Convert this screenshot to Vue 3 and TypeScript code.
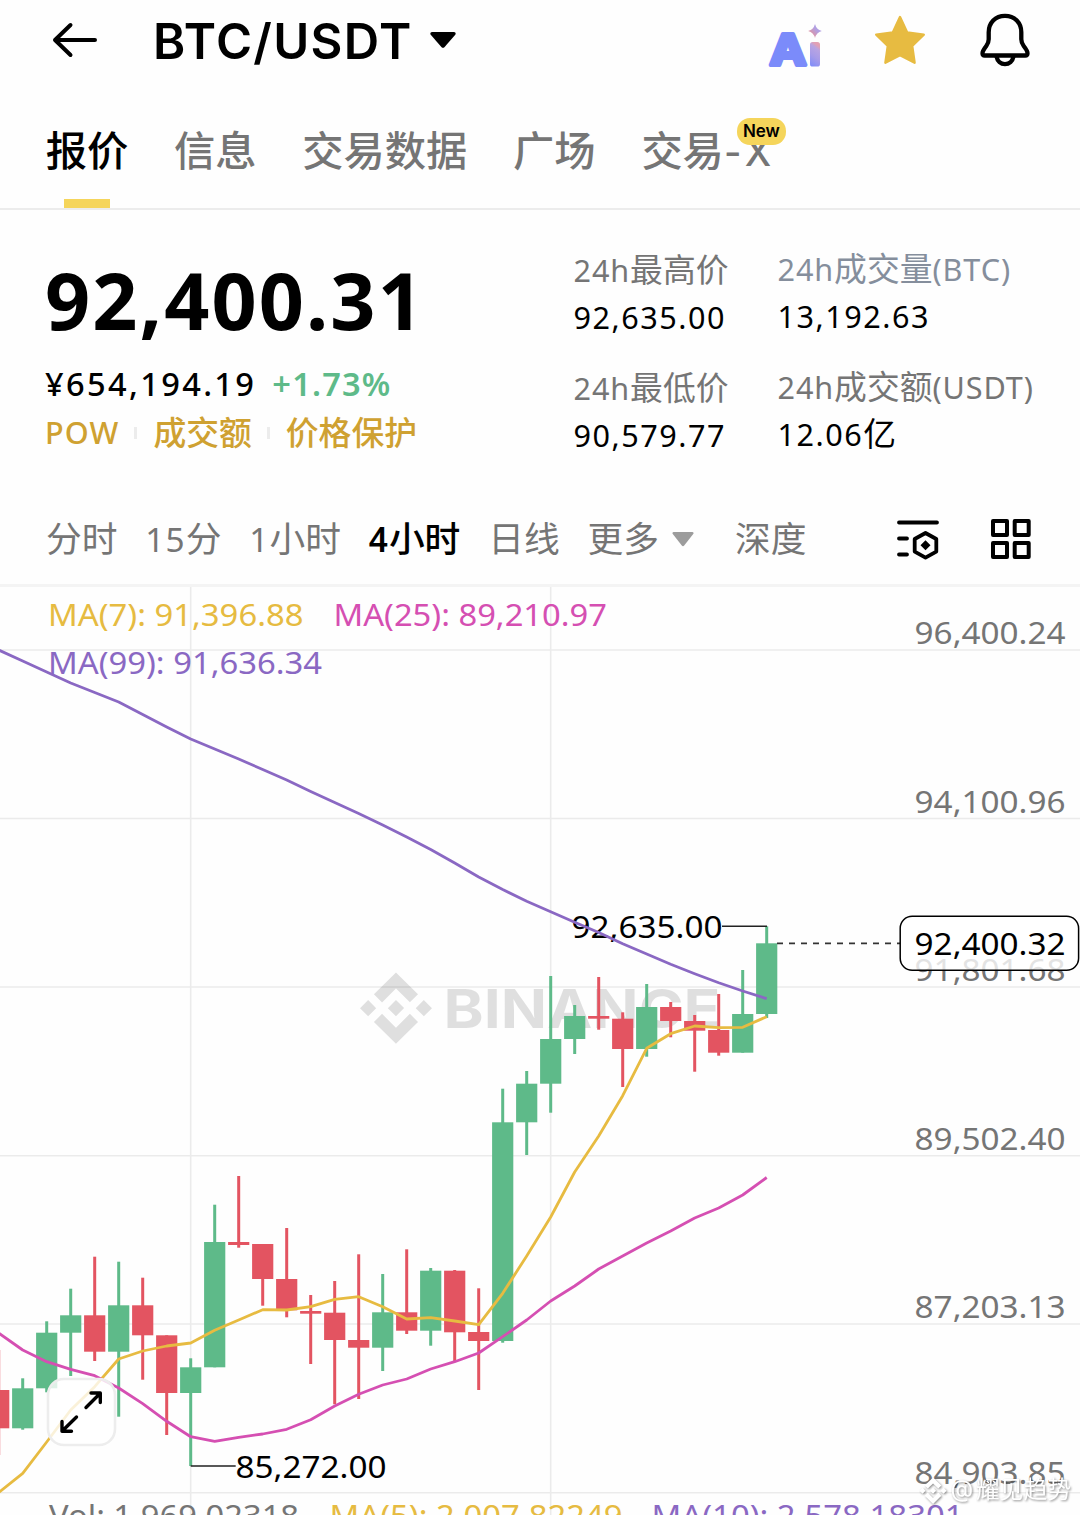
<script setup lang="ts">
interface Run { text: string; latin: boolean }
interface Stat { label: string; value: string; cool?: boolean }
type Candle = [top: number, bottom: number, high: number, low: number, up: boolean]

// Latin runs are set slightly smaller than the Chinese glyphs beside them.
function runs(text: string): Run[] {
  const parts = text.match(/[\x20-\x7e¥]+|[^\x20-\x7e¥]+/g) ?? []
  return parts.map((part) => ({ text: part, latin: /^[\x20-\x7e¥]/.test(part) }))
}

const tabs = ['报价', '信息', '交易数据', '广场', '交易-X']
const tags = ['POW', '成交额', '价格保护']
const statColumns: Stat[][] = [
  [
    { label: '24h最高价', value: '92,635.00' },
    { label: '24h最低价', value: '90,579.77' },
  ],
  [
    { label: '24h成交量(BTC)', value: '13,192.63', cool: true },
    { label: '24h成交额(USDT)', value: '12.06亿' },
  ],
]
const intervals = ['分时', '15分', '1小时', '4小时', '日线']

const step = 24
const firstX = -1.3
const xAt = (i: number): number => firstX + i * step

const candles: Candle[] = [
  [1390, 1428.3, 1350, 1455, false],
  [1388.3, 1428.3, 1378.3, 1429.7, true],
  [1332.7, 1388.3, 1321.3, 1392.3, true],
  [1315.3, 1332.7, 1288.7, 1376, true],
  [1315.3, 1351.7, 1256.7, 1361, false],
  [1305.3, 1351.7, 1261.7, 1416.7, true],
  [1305.3, 1335.3, 1277.7, 1379.7, false],
  [1335.3, 1393, 1335.3, 1435, false],
  [1367.3, 1393, 1358.3, 1466, true],
  [1242, 1367.3, 1204.7, 1367.3, true],
  [1242, 1245, 1176, 1247.7, false],
  [1244, 1279, 1244, 1305.7, false],
  [1279, 1310.3, 1228, 1317.3, false],
  [1311, 1313.7, 1295, 1364, false],
  [1312.7, 1340, 1281, 1404.3, false],
  [1340, 1347.7, 1254.3, 1399, false],
  [1312.3, 1347.7, 1274, 1371, true],
  [1312.3, 1330.7, 1249.3, 1334, false],
  [1270.7, 1330.7, 1268, 1345.7, true],
  [1270.7, 1332.3, 1270, 1362, false],
  [1332, 1341, 1288.3, 1390, false],
  [1122.3, 1341, 1088.7, 1342.7, true],
  [1083.7, 1122.3, 1071, 1155, true],
  [1039, 1083.7, 976, 1112.7, true],
  [1016, 1039, 1005, 1054, true],
  [1016, 1018.7, 977, 1029.7, false],
  [1018.7, 1049, 1012.3, 1087, false],
  [1007, 1049, 984, 1056.7, true],
  [1007, 1021, 1002, 1037.3, false],
  [1021, 1030.7, 1015, 1071.7, false],
  [1030, 1052.7, 994, 1055.7, false],
  [1014, 1052.7, 970, 1052.7, true],
  [943.3, 1014, 926.3, 1018, true],
]

const ma7 = [1492.5, 1473.3, 1442, 1410, 1386.7, 1359, 1351, 1346, 1343, 1330.3, 1320, 1309.7, 1310, 1306.7, 1299.3, 1296.7, 1306.7, 1319, 1317.7, 1321, 1324.7, 1293.3, 1256, 1217, 1172, 1136, 1095.7, 1048.3, 1033.7, 1026, 1027.7, 1027.3, 1016.7]
const ma25 = [1333, 1350, 1361.7, 1369.3, 1375.7, 1388, 1403.7, 1421.3, 1436.7, 1441.4, 1437.3, 1434, 1429.3, 1419.7, 1406, 1394.3, 1385, 1379, 1369, 1361.7, 1353, 1336.7, 1320, 1301, 1286, 1269, 1256, 1243, 1231, 1218, 1208, 1195, 1177.5]
const ma99 = [650, 661, 672, 683, 692.5, 702, 714.5, 727, 739, 749, 759, 769.5, 780, 791.5, 802.5, 813.5, 825, 837, 849.5, 863, 877, 889.5, 901.3, 911.7, 922.3, 932.5, 943.7, 954, 964.3, 973.7, 982.7, 991, 998.7]
const points = (values: number[]): string => values.map((y, i) => `${xAt(i)},${y}`).join(' ')

const axis = [
  { y: 650, base: 644.4, label: '96,400.24' },
  { y: 818.5, base: 813.4, label: '94,100.96' },
  { y: 987, base: 981.4, label: '91,801.68' },
  { y: 1155.7, base: 1150.4, label: '89,502.40' },
  { y: 1324, base: 1318.4, label: '87,203.13' },
  { y: 1492.7, base: 1484, label: '84,903.85' },
]

const legend = [
  { x: 48, y: 626.2, w: 255.5, color: '#e6bb41', text: 'MA(7): 91,396.88' },
  { x: 333.5, y: 626.2, w: 273.5, color: '#d54fb2', text: 'MA(25): 89,210.97' },
  { x: 48, y: 674.4, w: 274, color: '#8a68c3', text: 'MA(99): 91,636.34' },
  { x: 49, y: 1526.5, w: 250, color: '#757575', text: 'Vol: 1,969.02318' },
  { x: 329.5, y: 1526.5, w: 293, color: '#e6bb41', text: 'MA(5): 2,007.82249' },
  { x: 651.5, y: 1526.5, w: 312, color: '#8a68c3', text: 'MA(10): 2,578.18301' },
]

const binanceMark = 'M16.624 13.9202l2.7175 2.7154-7.353 7.353-7.353-7.352 2.7175-2.7164 4.6355 4.6595 4.6356-4.6595zm4.6366-4.6366L24 12l-2.7154 2.7164L18.5682 12l2.6924-2.7164zm-9.272.001l2.7163 2.6914-2.7164 2.7174v-.001L9.2721 12l2.7164-2.7154zm-9.2722-.001L5.4088 12l-2.6914 2.6924L0 12l2.7164-2.7164zM11.9885.0115l7.353 7.329-2.7174 2.7154-4.6356-4.6356-4.6355 4.6595-2.7174-2.7154 7.353-7.353z'
</script>

<template>
  <main class="screen">
    <header class="topbar">
      <svg class="back" width="48" height="40" viewBox="0 0 48 40" fill="none" stroke="#000" stroke-width="4" stroke-linecap="round" stroke-linejoin="round">
        <path d="M44 20H4M19.500 5L4 20l15.500 15" />
      </svg>
      <h1 class="pair">BTC/USDT</h1>
      <svg class="pair-caret" width="26" height="16" viewBox="0 0 26 16">
        <path d="M2 0h22q2.500.6 1.300 2.800L14.600 15q-1.600 1.700-3.200 0L.7 2.800Q-.5.6 2 0z" />
      </svg>
      <div class="actions">
        <svg class="assistant" width="56" height="46" viewBox="0 0 56 46">
          <defs>
            <linearGradient id="spark" x1="0" y1="1" x2="1" y2="0">
              <stop offset="0.1" stop-color="#f08f8a" /><stop offset="0.6" stop-color="#b2a0e2" />
            </linearGradient>
            <linearGradient id="stem" x1="0" y1="1" x2="0.3" y2="0">
              <stop offset="0" stop-color="#7b8bfa" /><stop offset="0.5" stop-color="#a89ce8" />
              <stop offset="0.85" stop-color="#b8a4e2" /><stop offset="1" stop-color="#e2a0b4" />
            </linearGradient>
          </defs>
          <text class="ai" x="1.800" y="43" textLength="36.500" lengthAdjust="spacingAndGlyphs">A</text>
          <rect x="42" y="20" width="10" height="24.500" rx="2.600" fill="url(#stem)" />
          <path d="M47 2q1.400 5.500 6.800 7Q48.400 10.500 47 16q-1.400-5.500-6.800-7Q45.600 7.500 47 2z" fill="url(#spark)" />
        </svg>
        <svg class="favorite" width="52" height="52" viewBox="0 0 52 52">
          <path d="M26 3L33.200 18.400 49.800 20.600 38.200 32 40.600 48.700 26 41.200 11.400 48.700 13.800 32 2.200 20.600 18.800 18.400z" fill="#e7bb41" stroke="#e7bb41" stroke-width="2.400" stroke-linejoin="round" />
        </svg>
        <svg class="bell" width="50" height="54" viewBox="0 0 50 54" fill="none" stroke="#000" stroke-width="4.300" stroke-linejoin="round">
          <path d="M25 2.800c-9.800 0-16.300 7.100-16.300 16.500v7c0 2.500-.6 4.300-2.400 6.700-2.500 3.200-3.800 5.300-3.800 7.200 0 1.500.8 2.300 2.200 2.300h40.600c1.400 0 2.200-.8 2.200-2.300 0-1.900-1.300-4-3.800-7.200-1.800-2.400-2.400-4.200-2.400-6.700v-7C41.300 9.900 34.800 2.800 25 2.800z" />
          <path d="M16.500 43.500c.9 4.600 4.300 7.600 8.500 7.600s7.600-3 8.500-7.600" />
        </svg>
      </div>
    </header>

    <nav class="tabs">
      <a v-for="(tab, i) in tabs" :key="tab" class="tab" :class="{ active: i === 0 }">
        <span v-for="run in runs(tab)" :key="run.text" :class="{ latin: run.latin }">{{ run.text }}</span>
        <b v-if="i === tabs.length - 1" class="badge">New</b>
      </a>
    </nav>

    <section class="summary">
      <div class="quote">
        <div class="price">92,400.31</div>
        <div class="fiat"><span class="cny">¥654,194.19</span><span class="change">+1.73%</span></div>
        <div class="tags">
          <span v-for="tag in tags" :key="tag" class="tag">
            <span v-for="run in runs(tag)" :key="run.text" :class="{ latin: run.latin }">{{ run.text }}</span>
          </span>
        </div>
      </div>
      <div v-for="(column, c) in statColumns" :key="c" class="stats">
        <dl v-for="stat in column" :key="stat.label" class="stat">
          <dt :class="{ cool: stat.cool }">
            <span v-for="run in runs(stat.label)" :key="run.text" :class="{ latin: run.latin }">{{ run.text }}</span>
          </dt>
          <dd>
            <span v-for="run in runs(stat.value)" :key="run.text" :class="{ latin: run.latin }">{{ run.text }}</span>
          </dd>
        </dl>
      </div>
    </section>

    <nav class="intervals">
      <a v-for="(item, i) in intervals" :key="item" class="interval" :class="{ active: i === 3 }">
        <span v-for="run in runs(item)" :key="run.text" :class="{ latin: run.latin }">{{ run.text }}</span>
      </a>
      <a class="interval more">更多
        <svg width="22" height="15" viewBox="0 0 22 15"><path d="M1.500 0h19q1.800.5.700 2.100L12.200 13.600q-1.200 1.200-2.400 0L.8 2.100Q-.3.5 1.500 0z" fill="#9c9c9c" /></svg>
      </a>
      <a class="interval depth">深度</a>
      <div class="tools">
        <svg width="44" height="42" viewBox="0 0 44 42" fill="none" stroke="#000" stroke-width="3.800" stroke-linecap="round" stroke-linejoin="round">
          <path d="M3 4.500h38M3 20.500h8M3 36.500h8" />
          <path d="M29.500 15l10.800 6v12.600l-10.800 6-10.800-6V21z" />
          <path d="M29.500 22.200l5 5-5 5-5-5z" fill="#000" stroke="none" />
        </svg>
        <svg width="42" height="42" viewBox="0 0 42 42" fill="none" stroke="#000" stroke-width="4" stroke-linejoin="round">
          <rect x="3" y="3" width="14" height="14" /><rect x="24.700" y="3" width="14" height="14" />
          <rect x="3" y="25" width="14" height="14" /><rect x="24.700" y="25" width="14" height="14" />
        </svg>
      </div>
    </nav>

    <section class="chart">
      <svg width="1080" height="928" viewBox="0 587 1080 928">
        <g stroke="#ebebeb" stroke-width="1.600">
          <line v-for="tick in axis" :key="tick.y" x1="0" x2="1080" :y1="tick.y" :y2="tick.y" />
          <line x1="190.700" x2="190.700" y1="587" y2="1515" />
          <line x1="550.700" x2="550.700" y1="587" y2="1515" />
        </g>

        <g fill="#000" fill-opacity="0.120">
          <path :d="binanceMark" transform="translate(360 972.500) scale(3 2.970)" />
          <text class="brand" x="443.500" y="1028" textLength="277" lengthAdjust="spacingAndGlyphs">BINANCE</text>
        </g>

        <g class="num" fill="#757575">
          <text v-for="tick in axis" :key="tick.label" x="914.600" :y="tick.base" textLength="151" lengthAdjust="spacingAndGlyphs">{{ tick.label }}</text>
        </g>

        <g v-for="([top, bottom, high, low, up], i) in candles" :key="i" :fill="up ? '#5eba89' : '#e35461'">
          <rect :x="xAt(i) - 1.500" :y="high" width="3" :height="low - high" />
          <rect :x="xAt(i) - 10.600" :y="top" width="21.200" :height="bottom - top" />
        </g>

        <g class="num" fill="#000">
          <text x="571.500" y="938.200" textLength="151" lengthAdjust="spacingAndGlyphs">92,635.00</text>
          <text x="235.500" y="1478.200" textLength="151" lengthAdjust="spacingAndGlyphs">85,272.00</text>
        </g>
        <path d="M722 926.300h45M190.700 1466h45" stroke="#222" stroke-width="1.600" />

        <g class="num">
          <text v-for="item in legend" :key="item.text" :x="item.x" :y="item.y" :fill="item.color" :textLength="item.w" lengthAdjust="spacingAndGlyphs">{{ item.text }}</text>
        </g>

        <g fill="none" stroke-width="2.800" stroke-linejoin="round">
          <polyline :points="points(ma7)" stroke="#e7bb41" />
          <polyline :points="points(ma25)" stroke="#d54fb2" />
          <polyline :points="points(ma99)" stroke="#8a68c3" />
        </g>

        <path d="M777 943.300h123" stroke="#333" stroke-width="1.700" stroke-dasharray="6 6" />
        <rect x="900.200" y="916.200" width="178.400" height="54" rx="12" fill="#fff" fill-opacity="0.800" stroke="#000" stroke-width="1.500" />
        <text class="num" x="914.600" y="955.400" textLength="151" lengthAdjust="spacingAndGlyphs">92,400.32</text>

        <rect x="48" y="1379" width="67" height="66" rx="16" fill="#fff" fill-opacity="0.800" stroke="#ededed" stroke-width="2.600" />
        <path d="M86 1407.500L100 1393.500M91 1393h9.300v9.500M76.500 1417L62.500 1430.800M62 1421.500v9.700h9.500" fill="none" stroke="#000" stroke-width="3.400" stroke-linecap="round" stroke-linejoin="round" />

        <g class="credit">
          <path :d="binanceMark" transform="translate(919.500 1477.500) scale(1.130 1.100)" />
          <text x="950.500" y="1497">@</text>
          <text x="976" y="1498" textLength="95">耀见趋势</text>
        </g>
      </svg>
    </section>
  </main>
</template>

<style>
body { background: #fefefe; }
</style>

<style scoped>
.screen {
  width: 1080px;
  height: 1515px;
  overflow: hidden;
  background: #fefefe;
  color: #000;
  font-family: Inter, "Noto Sans CJK SC", sans-serif;
}
svg { display: block; flex: none; }
.latin { font-family: "Noto Sans", sans-serif; font-size: 0.933em; line-height: 1; letter-spacing: 1.1px; }

.topbar { display: flex; align-items: center; height: 82px; box-sizing: border-box; padding: 0 50px 0 51px; }
.back { margin-bottom: 2px; }
.pair { margin: 1px 17px 0 54px; font-size: 49px; line-height: 82px; font-weight: 600; letter-spacing: 1.3px; }
.pair-caret { margin-bottom: 2px; }
.actions { display: flex; align-items: center; gap: 54px; margin-left: auto; }
.assistant { margin: 7px -4px 0 0; }
.favorite { margin-bottom: 2px; }
.bell { margin-bottom: 2px; }
.ai { font: 700 43px Inter, sans-serif; fill: #7b8bfa; stroke: #7b8bfa; stroke-width: 4px; stroke-linejoin: round; }

.tabs { display: flex; gap: 45.8px; height: 128px; box-sizing: border-box; padding: 39px 0 0 45.7px; border-bottom: 2px solid #ececec; }
.tab { position: relative; font-size: 41.25px; line-height: 60px; font-weight: 500; color: #757575; white-space: nowrap; }
.tab .latin { font-family: inherit; font-size: 0.915em; letter-spacing: 3.5px; }
.tab.active { color: #000; }
.tab.active::after { content: ""; position: absolute; left: 18px; bottom: 0; width: 46px; height: 9px; background: #f5d55b; }
.badge { position: absolute; left: 95.5px; top: -3px; width: 49px; height: 27px; border-radius: 13px; background: #f5d55b; color: #000; font-size: 17px; line-height: 27px; font-weight: 600; text-align: center; }

.summary { display: flex; height: 280px; }
.quote { width: 528.5px; padding: 50px 0 0 45px; }
.price { font-family: "Noto Sans", sans-serif; font-size: 79px; line-height: 80px; font-weight: 700; letter-spacing: 2.1px; }
.fiat { display: flex; gap: 16px; margin-top: 20.5px; font-family: "Noto Sans", sans-serif; font-size: 32.6px; line-height: 46px; font-weight: 500; letter-spacing: 2.35px; }
.change { color: #5eba89; font-weight: 600; letter-spacing: 1.2px; }
.tags { display: flex; align-items: center; margin-top: 3px; font-size: 32.8px; line-height: 46px; font-weight: 500; color: #cfa131; }
.tag { display: flex; align-items: baseline; }
.tag + .tag { position: relative; padding-left: 34px; }
.tag + .tag::before { content: ""; position: absolute; left: 15px; top: 17px; width: 3px; height: 12px; background: #ececec; }
.stats { width: 204px; padding-top: 37px; white-space: nowrap; }
.stats + .stats { padding-top: 35.5px; }
.stat { margin: 0 0 24px; font-size: 32.8px; line-height: 47px; }
.stat dt { color: #757575; }
.stat dt .latin { letter-spacing: 0.9px; }
.stat dt.cool { color: #858e9c; }
.stat dd { margin: 0; }
.stat dd .latin { letter-spacing: 1.5px; }

.intervals { display: flex; height: 97px; box-sizing: border-box; padding: 19px 48px 0 46px; border-bottom: 3px solid #f4f4f4; font-size: 35.75px; line-height: 60px; color: #757575; white-space: nowrap; }
.interval { height: 60px; margin-right: 27.8px; }
.interval.active { color: #000; font-weight: 500; }
.interval.active .latin { font-weight: 600; }
.more { display: flex; align-items: center; gap: 13px; margin-right: 41px; }
.tools { display: flex; align-items: center; gap: 50px; height: 60px; margin-left: auto; }

.chart { height: 928px; overflow: hidden; }
.num { font-family: "Noto Sans", sans-serif; font-size: 30.8px; }
.brand { font-size: 54px; font-weight: 700; }
.credit { fill: #fff; font-size: 23.5px; filter: drop-shadow(1px 1px 1px rgb(0 0 0 / 0.45)); }
</style>
